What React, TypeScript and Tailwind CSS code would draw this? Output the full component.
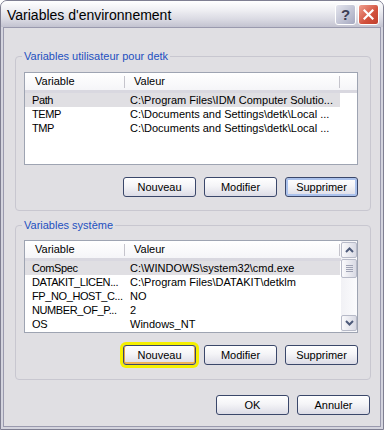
import React from "react";

type Row = [string, string];

function Btn({ label, extra = "" }: { label: string; extra?: string }) {
  return (
    <div
      className={`w-[73px] h-[20px] rounded-[3px] border border-[#3a476a] bg-[linear-gradient(#ffffff,#f4f4f7_45%,#dcdce6)] flex items-center justify-center text-[11px] text-black leading-none ${extra}`}
    >
      {label}
    </div>
  );
}

function Header() {
  return (
    <div className="h-[20px] flex bg-[linear-gradient(#ffffff,#f5f5f8)] border-b-[3px] border-[#d9d8e0] text-[11px] text-black shrink-0">
      <div className="w-[100px] flex items-center pl-[10px] relative">
        Variable
        <div className="absolute right-0 top-[3px] bottom-[2px] w-[1px] bg-[#c5c4cc]" />
      </div>
      <div className="w-[215px] flex items-center pl-[9px] relative">
        Valeur
        <div className="absolute right-0 top-[3px] bottom-[2px] w-[1px] bg-[#c5c4cc]" />
      </div>
      <div className="flex-1" />
    </div>
  );
}

function Rows({ rows }: { rows: Row[] }) {
  return (
    <div className="flex flex-col">
      {rows.map((r, i) => (
        <div
          key={i}
          className={`w-[315px] h-[14px] flex text-[11px] leading-[14px] text-black ${i === 0 ? "bg-[#e0dfe3]" : ""}`}
        >
          <div className="w-[100px] shrink-0 pl-[7px] whitespace-nowrap tracking-[-0.4px]">{r[0]}</div>
          <div className="w-[215px] shrink-0 pl-[5px] overflow-hidden whitespace-nowrap">{r[1]}</div>
        </div>
      ))}
    </div>
  );
}

function Chevron({ up }: { up: boolean }) {
  return (
    <svg width="9" height="6" viewBox="0 0 9 6">
      <path
        d={up ? "M1 5 L4.5 1.5 L8 5" : "M1 1 L4.5 4.5 L8 1"}
        fill="none"
        stroke="#4d5a7a"
        strokeWidth="2"
      />
    </svg>
  );
}

function Scrollbar() {
  return (
    <div className="w-[16px] h-full bg-[linear-gradient(to_right,#f1f1f5,#fbfbfd)] flex flex-col items-center pt-[1px] pb-[1px]">
      <div className="w-[16px] h-[16px] rounded-[2px] border border-[#b7bac8] bg-[linear-gradient(to_right,#fafafc,#d9dae4)] flex items-center justify-center">
        <Chevron up={true} />
      </div>
      <div className="mt-[1px] w-[16px] h-[19px] rounded-[2px] border border-[#b7bac8] bg-[linear-gradient(to_right,#fafafc,#d9dae4)] flex flex-col items-center justify-center gap-[1px]">
        <div className="w-[7px] h-[1px] bg-[#9ea2b4]" />
        <div className="w-[7px] h-[1px] bg-[#9ea2b4]" />
        <div className="w-[7px] h-[1px] bg-[#9ea2b4]" />
        <div className="w-[7px] h-[1px] bg-[#9ea2b4]" />
      </div>
      <div className="flex-1" />
      <div className="w-[16px] h-[16px] rounded-[2px] border border-[#b7bac8] bg-[linear-gradient(to_right,#fafafc,#d9dae4)] flex items-center justify-center">
        <Chevron up={false} />
      </div>
    </div>
  );
}

function Group({
  label,
  rows,
  scroll,
  first,
  supExtra,
  nouvExtra,
}: {
  label: string;
  rows: Row[];
  scroll: boolean;
  first: boolean;
  supExtra?: string;
  nouvExtra?: string;
}) {
  return (
    <div
      className={`relative ml-[11px] w-[356px] h-[155px] border border-[#c8c7d0] rounded-[4px] flex flex-col ${first ? "mt-[28px]" : "mt-[14px]"}`}
    >
      <span className="absolute left-[6px] top-[-8px] px-[2px] bg-[#e0dfe3] text-[11px] leading-[14px] text-[#2350c0]">
        {label}
      </span>
      <div
        className={`ml-[8px] w-[334px] h-[93px] border border-[#9ea4b2] bg-white flex ${first ? "mt-[15px]" : "mt-[14px]"}`}
      >
        <div className="flex-1 flex flex-col overflow-hidden">
          <Header />
          <Rows rows={rows} />
        </div>
        {scroll && <Scrollbar />}
      </div>
      <div className="mt-[12px] ml-[107px] flex gap-[8px]">
        <Btn label="Nouveau" extra={nouvExtra} />
        <Btn label="Modifier" />
        <Btn label="Supprimer" extra={supExtra} />
      </div>
    </div>
  );
}

export default function App() {
  const userRows: Row[] = [
    ["Path", "C:\\Program Files\\IDM Computer Solutio..."],
    ["TEMP", "C:\\Documents and Settings\\detk\\Local ..."],
    ["TMP", "C:\\Documents and Settings\\detk\\Local ..."],
  ];
  const sysRows: Row[] = [
    ["ComSpec", "C:\\WINDOWS\\system32\\cmd.exe"],
    ["DATAKIT_LICEN...", "C:\\Program Files\\DATAKIT\\detklm"],
    ["FP_NO_HOST_C...", "NO"],
    ["NUMBER_OF_P...", "2"],
    ["OS", "Windows_NT"],
  ];
  return (
    <div className="w-[384px] h-[430px] overflow-hidden bg-white font-['Liberation_Sans',Arial,sans-serif]">
      <div className="w-full h-full rounded-t-[7px] border border-[#7f7f92] bg-[#d4d4de] flex flex-col overflow-hidden">
        <div className="h-[26px] shrink-0 flex items-center bg-[linear-gradient(to_bottom,#ffffff,#efeff3_35%,#dadae3_70%,#c3c3d0)] pl-[6px] pr-[4px]">
          <span className="text-[14px] text-black leading-none mt-[2px]">Variables d'environnement</span>
          <div className="flex-1" />
          <div className="w-[21px] h-[21px] rounded-[3px] border border-white bg-[linear-gradient(135deg,#e4e5ee,#a6a9c0)] flex items-center justify-center text-[15px] font-bold text-[#3d3f55] leading-none">
            ?
          </div>
          <div className="ml-[2px] w-[21px] h-[21px] rounded-[3px] border border-white bg-[linear-gradient(135deg,#f0a090,#d2503c_60%,#c0402e)] flex items-center justify-center">
            <svg width="11" height="11" viewBox="0 0 11 11">
              <path d="M1.5 1.5 L9.5 9.5 M9.5 1.5 L1.5 9.5" stroke="white" strokeWidth="2.2" strokeLinecap="square" />
            </svg>
          </div>
        </div>
        <div className="flex-1 px-[2px] pb-[2px] flex flex-col">
          <div className="flex-1 border border-[#9a9aae] bg-[#e0dfe3] flex flex-col">
            <Group
              label="Variables utilisateur pour detk"
              rows={userRows}
              scroll={false}
              first={true}
              supExtra="shadow-[inset_0_0_0_2px_#aac1ec]"
            />
            <Group
              label="Variables système"
              rows={sysRows}
              scroll={true}
              first={false}
              nouvExtra="shadow-[inset_1px_0_0_#e3a646,inset_-1px_0_0_#e3a646,inset_0_-2px_0_#eeb455,0_0_0_3px_#f5f000]"
            />
            <div className="mt-[15px] pr-[10px] flex justify-end gap-[8px]">
              <Btn label="OK" />
              <Btn label="Annuler" />
            </div>
          </div>
        </div>
      </div>
    </div>
  );
}
